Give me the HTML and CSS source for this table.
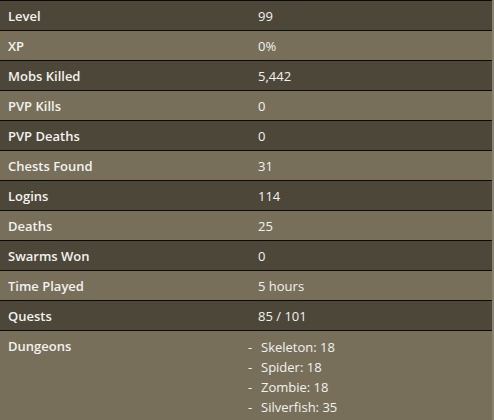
FILE: index.html
```html
<!DOCTYPE html>
<html>
<head>
<meta charset="utf-8">
<link rel="stylesheet" href="styles.css">
</head>
<body>
<table class="stats">
  <tr class="dark"><th>Level</th><td>99</td></tr>
  <tr class="light"><th>XP</th><td>0%</td></tr>
  <tr class="dark"><th>Mobs Killed</th><td>5,442</td></tr>
  <tr class="light"><th>PVP Kills</th><td>0</td></tr>
  <tr class="dark"><th>PVP Deaths</th><td>0</td></tr>
  <tr class="light"><th>Chests Found</th><td>31</td></tr>
  <tr class="dark"><th>Logins</th><td>114</td></tr>
  <tr class="light"><th>Deaths</th><td>25</td></tr>
  <tr class="dark"><th>Swarms Won</th><td>0</td></tr>
  <tr class="light"><th>Time Played</th><td>5 hours</td></tr>
  <tr class="dark"><th>Quests</th><td>85 / 101</td></tr>
  <tr class="light tall"><th>Dungeons</th><td>
    <ul class="dlist">
      <li><span class="dash">-</span>Skeleton: 18</li>
      <li><span class="dash">-</span>Spider: 18</li>
      <li><span class="dash">-</span>Zombie: 18</li>
      <li><span class="dash">-</span>Silverfish: 35</li>
    </ul>
  </td></tr>
</table>
</body>
</html>
```
FILE: styles.css
```css
html, body {
  margin: 0;
  padding: 0;
  background: #8a8270;
}
.stats {
  width: 492px;
  border-collapse: collapse;
  font-family: "Open Sans", sans-serif;
  font-size: 13px;
  color: #f2f2ee;
}
.stats tr { height: 30px; }
.stats th, .stats td {
  border-top: 1px solid #0d0b08;
  padding: 0 8px;
  text-align: left;
  vertical-align: middle;
  height: 29px;
}
.stats th { width: 234px; font-weight: 600; }
.stats td { font-weight: 400; }
.dark { background: #4d473a; }
.light { background: #776f5a; }
.tall th { vertical-align: top; padding-top: 6px; height: 84px; }
.tall td { vertical-align: top; padding: 6px 0 0 0; }
.dlist {
  list-style: none;
  margin: 0 0 0 -2px;
  padding: 0;
}
.dlist li { line-height: 20px; }
.dash { display: inline-block; width: 13px; }
```
